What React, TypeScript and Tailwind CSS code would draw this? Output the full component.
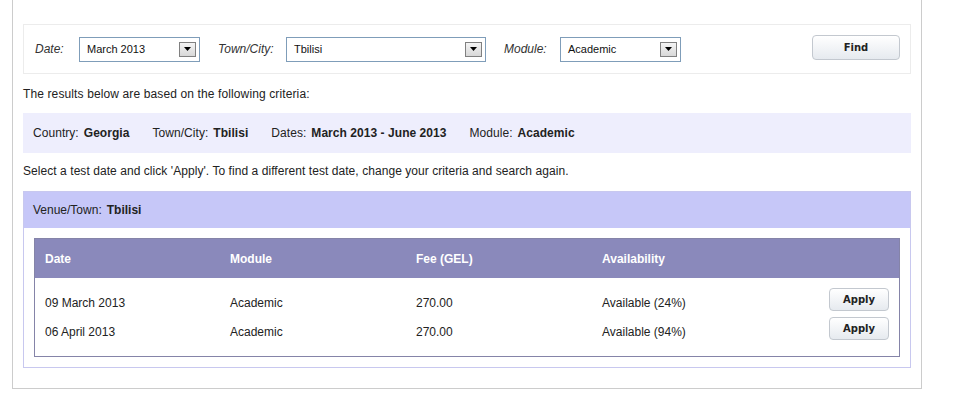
import React from "react";

function Select({ value, width }: { value: string; width: string }) {
  return (
    <div
      className={`${width} h-[25px] border border-[#7f9db9] bg-white flex items-center pl-[7px] pr-[3px]`}
    >
      <span className="text-[11px] text-[#111] flex-1 leading-none">{value}</span>
      <span className="w-[17px] h-[15px] border border-[#808080] bg-gradient-to-b from-[#f4f4f4] to-[#d8d8d8] flex items-center justify-center">
        <svg width="7" height="4" viewBox="0 0 7 4">
          <path d="M0 0h7L3.5 4z" fill="#000" />
        </svg>
      </span>
    </div>
  );
}

function Btn({ label, className }: { label: string; className: string }) {
  return (
    <button
      className={`${className} rounded-[4px] border border-[#c3c8cf] bg-gradient-to-b from-[#ffffff] to-[#e6eaef] text-[10px] font-bold text-[#222] flex items-center justify-center`}
      style={{ fontFamily: '"DejaVu Sans", Tahoma, sans-serif' }}
    >
      {label}
    </button>
  );
}

export default function App() {
  const rows = [
    { date: "09 March 2013", module: "Academic", fee: "270.00", avail: "Available (24%)" },
    { date: "06 April 2013", module: "Academic", fee: "270.00", avail: "Available (94%)" },
  ];
  return (
    <div
      className="w-[954px] h-[395px] bg-white text-[12px] text-[#222]"
      style={{ fontFamily: '"Liberation Sans", Arial, sans-serif' }}
    >
      <div className="ml-[12px] w-[910px] border-x border-b border-[#cccccc] pt-[24px] px-[10px] pb-[20px]">
        {/* search box */}
        <div className="h-[50px] border border-[#ececec] flex items-center pl-[11px]">
          <span className="w-[44px] italic text-[#333]">Date:</span>
          <Select value="March 2013" width="w-[121px]" />
          <span className="ml-[18px] w-[68px] italic text-[#333]">Town/City:</span>
          <Select value="Tbilisi" width="w-[200px]" />
          <span className="ml-[18px] w-[56px] italic text-[#333]">Module:</span>
          <Select value="Academic" width="w-[121px]" />
          <Btn label="Find" className="ml-auto mr-[10px] w-[88px] h-[25px] mt-[-3px]" />
        </div>

        <p className="mt-[12px] mb-[11px] leading-[16px] tracking-[0.12px]">
          The results below are based on the following criteria:
        </p>

        <div className="h-[40px] bg-[#eeeefd] flex items-center pl-[10px] gap-[23px] tracking-[0.05px]">
          <span>
            Country:<b className="ml-[5px] font-bold">Georgia</b>
          </span>
          <span>
            Town/City:<b className="ml-[5px] font-bold">Tbilisi</b>
          </span>
          <span>
            Dates:<b className="ml-[5px] font-bold">March 2013 - June 2013</b>
          </span>
          <span>
            Module:<b className="ml-[5px] font-bold">Academic</b>
          </span>
        </div>

        <p className="mt-[10px] mb-[12px] leading-[16px] tracking-[0.06px]">
          Select a test date and click 'Apply'. To find a different test date, change your criteria and search again.
        </p>

        <div className="border border-[#c8c8ef]">
          <div className="h-[36px] bg-[#c6c7f8] flex items-center pl-[9px]">
            Venue/Town:<b className="ml-[5px] font-bold">Tbilisi</b>
          </div>
          <div className="px-[10px] pt-[10px] pb-[10px] bg-white">
            <div className="border border-[#8584a8]">
              <div className="h-[39px] bg-[#8a89bb] flex items-center text-white font-bold">
                <span className="w-[185px] pl-[10px]">Date</span>
                <span className="w-[186px] pl-[10px]">Module</span>
                <span className="w-[186px] pl-[10px]">Fee (GEL)</span>
                <span className="pl-[10px]">Availability</span>
              </div>
              <div className="pt-[9px] pb-[11px]">
                {rows.map((r) => (
                  <div key={r.date} className="h-[29px] flex items-start">
                    <span className="w-[185px] pl-[10px] pt-[8px] leading-[16px]">{r.date}</span>
                    <span className="w-[186px] pl-[10px] pt-[8px] leading-[16px]">{r.module}</span>
                    <span className="w-[186px] pl-[10px] pt-[8px] leading-[16px]">{r.fee}</span>
                    <span className="pl-[10px] pt-[8px] leading-[16px]">{r.avail}</span>
                    <Btn label="Apply" className="ml-auto mr-[10px] mt-[1px] w-[60px] h-[23px]" />
                  </div>
                ))}
              </div>
            </div>
          </div>
        </div>
      </div>
    </div>
  );
}
